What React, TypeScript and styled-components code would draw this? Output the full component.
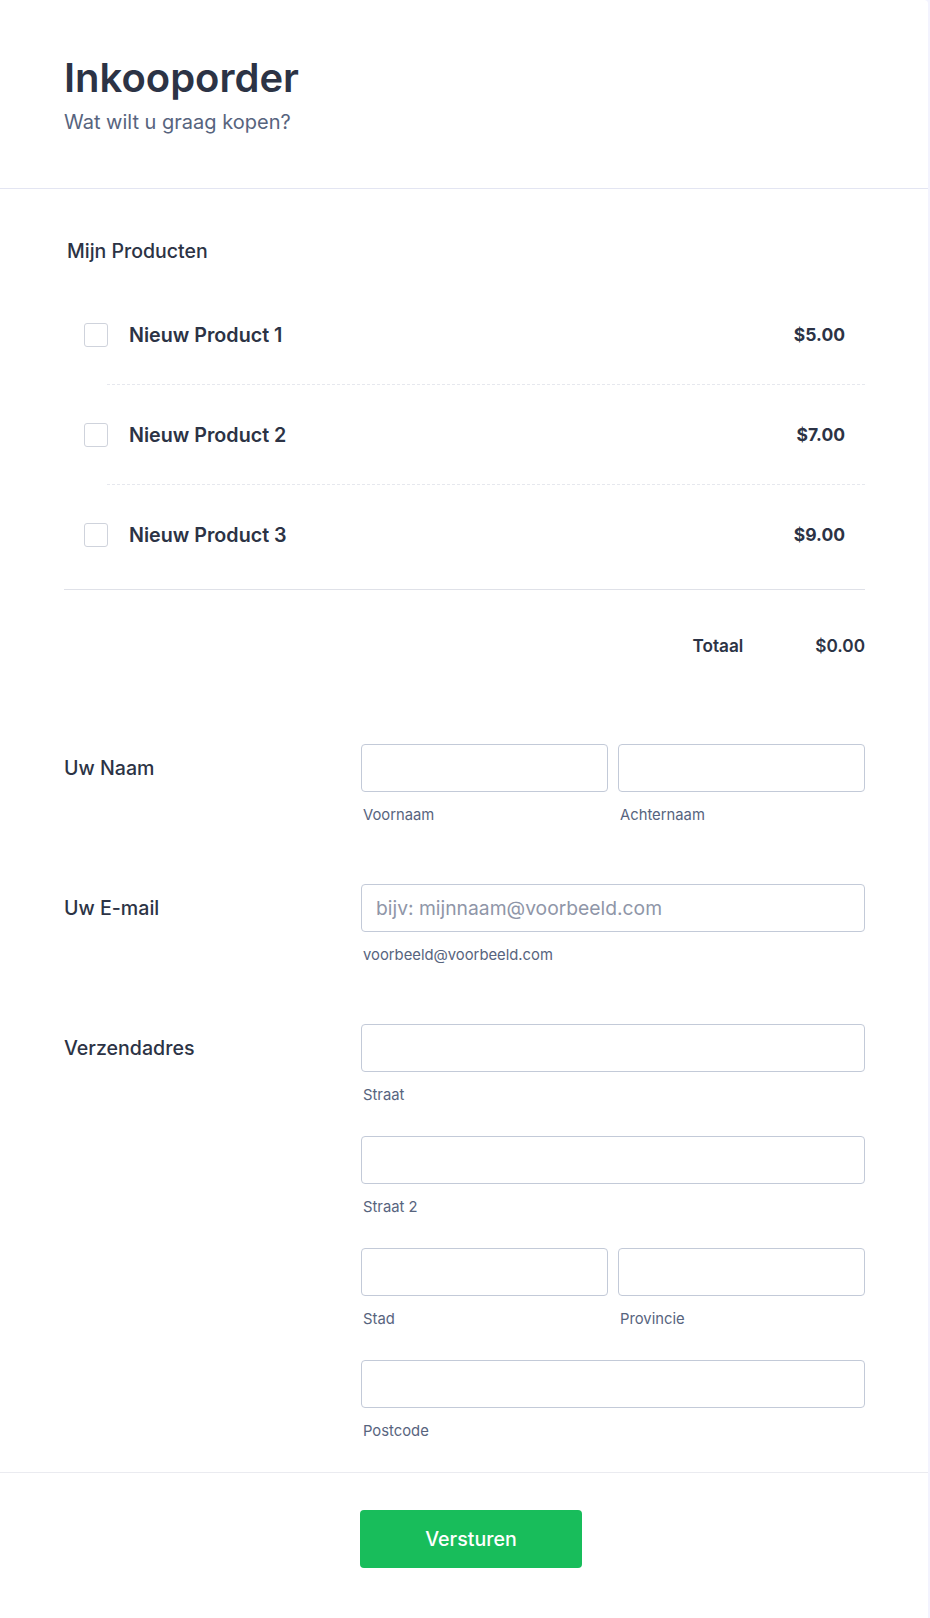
import React from 'react';
import styled, { createGlobalStyle } from 'styled-components';

const GlobalStyle = createGlobalStyle`
	* { box-sizing: border-box; }
	body {
		margin: 0;
		background: #f3f3fe;
		font-family: Inter, 'Noto Sans', 'Liberation Sans', sans-serif;
		color: #2c3345;
	}
`;

const products = [
	{ id: 1, name: 'Nieuw Product 1', price: 5 },
	{ id: 2, name: 'Nieuw Product 2', price: 7 },
	{ id: 3, name: 'Nieuw Product 3', price: 9 },
];

const money = (n: number) => `$${n.toFixed(2)}`;

const Card = styled.div`
	width: 928px;
	background: #fff;
	border-radius: 0 4px 0 0;
	border-bottom: 1px solid #eef0f5;
`;

const Header = styled.header`
	padding: 54px 64px 52px;
	border-bottom: 1px solid #e3e5f2;
`;

const Title = styled.h1`
	margin: 0;
	font-size: 40px;
	line-height: 48px;
	font-weight: 600;
	color: #2c3345;
`;

const Subtitle = styled.p`
	margin: 6px 0 0;
	font-size: 20px;
	line-height: 28px;
	color: #57647e;
`;

const Body = styled.div`
	padding: 48px 63px 31px 64px;
`;

const SectionLabel = styled.div`
	padding-left: 3px;
	font-size: 19.5px;
	line-height: 28px;
	font-weight: 500;
	margin-bottom: 20px;
`;

const ProductList = styled.div`
	display: flex;
	flex-direction: column;
	border-bottom: 1px solid #dfe1e8;
	padding-bottom: 5px;
`;

const ProductRow = styled.label`
	display: flex;
	align-items: center;
	height: 99px;
	padding: 0 20px;
	cursor: pointer;
`;

const Check = styled.span`
	width: 24px;
	height: 24px;
	border: 1px solid #cfd3dc;
	border-radius: 3px;
	flex-shrink: 0;
`;

const ProductName = styled.span`
	margin-left: 21px;
	font-size: 19.7px;
	font-weight: 600;
	flex: 1;
`;

const Price = styled.span`
	font-size: 17.5px;
	font-weight: 700;
`;

const Dashed = styled.div`
	margin-left: 43px;
	border-top: 1px dashed #e6e8ee;
`;

const TotalRow = styled.div`
	display: flex;
	justify-content: flex-end;
	align-items: center;
	gap: 72px;
	margin-top: 44px;
	font-size: 17.2px;
	line-height: 24px;
	font-weight: 600;
`;

const Fields = styled.div`
	display: flex;
	flex-direction: column;
	gap: 59px;
	margin-top: 86px;
`;

const FieldRow = styled.div`
	display: grid;
	grid-template-columns: 297px 1fr;
`;

const FieldLabel = styled.div`
	font-size: 19.6px;
	line-height: 48px;
	font-weight: 500;
`;

const Stack = styled.div`
	display: flex;
	flex-direction: column;
	gap: 31px;
`;

const Pair = styled.div`
	display: grid;
	grid-template-columns: 1fr 1fr;
	gap: 10px;
`;

const Sub = styled.div``;

const Input = styled.input`
	display: block;
	width: 100%;
	height: 48px;
	border: 1px solid #c3cad8;
	border-radius: 4px;
	padding: 0 14px;
	font-family: inherit;
	font-size: 19.3px;
	color: #2c3345;
	outline: none;
	&::placeholder {
		color: #8f96a8;
	}
`;

const Hint = styled.div`
	margin-top: 13px;
	padding-left: 2px;
	font-size: 14.8px;
	line-height: 20px;
	color: #57647e;
`;

const Footer = styled.footer`
	border-top: 1px solid #eaebf0;
	padding: 37px 0 50px;
	display: flex;
	justify-content: center;
`;

const SubmitButton = styled.button`
	width: 222px;
	height: 58px;
	margin-left: 14px;
	border: none;
	border-radius: 4px;
	background: #18bd5b;
	color: #fff;
	font-family: inherit;
	font-size: 19.6px;
	font-weight: 500;
	cursor: pointer;
`;

const Field = ({ hint, placeholder }: { hint: string; placeholder?: string }) => (
	<Sub>
		<Input placeholder={placeholder} />
		<Hint>{hint}</Hint>
	</Sub>
);

export default function App() {
	return (
		<>
			<GlobalStyle />
			<Card>
				<Header>
					<Title>Inkooporder</Title>
					<Subtitle>Wat wilt u graag kopen?</Subtitle>
				</Header>
				<Body>
					<SectionLabel>Mijn Producten</SectionLabel>
					<ProductList>
						{products.map((p, i) => (
							<React.Fragment key={p.id}>
								{i > 0 && <Dashed />}
								<ProductRow>
									<Check />
									<ProductName>{p.name}</ProductName>
									<Price>{money(p.price)}</Price>
								</ProductRow>
							</React.Fragment>
						))}
					</ProductList>
					<TotalRow>
						<span>Totaal</span>
						<span>{money(0)}</span>
					</TotalRow>
					<Fields>
						<FieldRow>
							<FieldLabel>Uw Naam</FieldLabel>
							<Pair>
								<Field hint="Voornaam" />
								<Field hint="Achternaam" />
							</Pair>
						</FieldRow>
						<FieldRow>
							<FieldLabel>Uw E-mail</FieldLabel>
							<Field hint="voorbeeld@voorbeeld.com" placeholder="bijv: mijnnaam@voorbeeld.com" />
						</FieldRow>
						<FieldRow>
							<FieldLabel>Verzendadres</FieldLabel>
							<Stack>
								<Field hint="Straat" />
								<Field hint="Straat 2" />
								<Pair>
									<Field hint="Stad" />
									<Field hint="Provincie" />
								</Pair>
								<Field hint="Postcode" />
							</Stack>
						</FieldRow>
					</Fields>
				</Body>
				<Footer>
					<SubmitButton>Versturen</SubmitButton>
				</Footer>
			</Card>
		</>
	);
}
